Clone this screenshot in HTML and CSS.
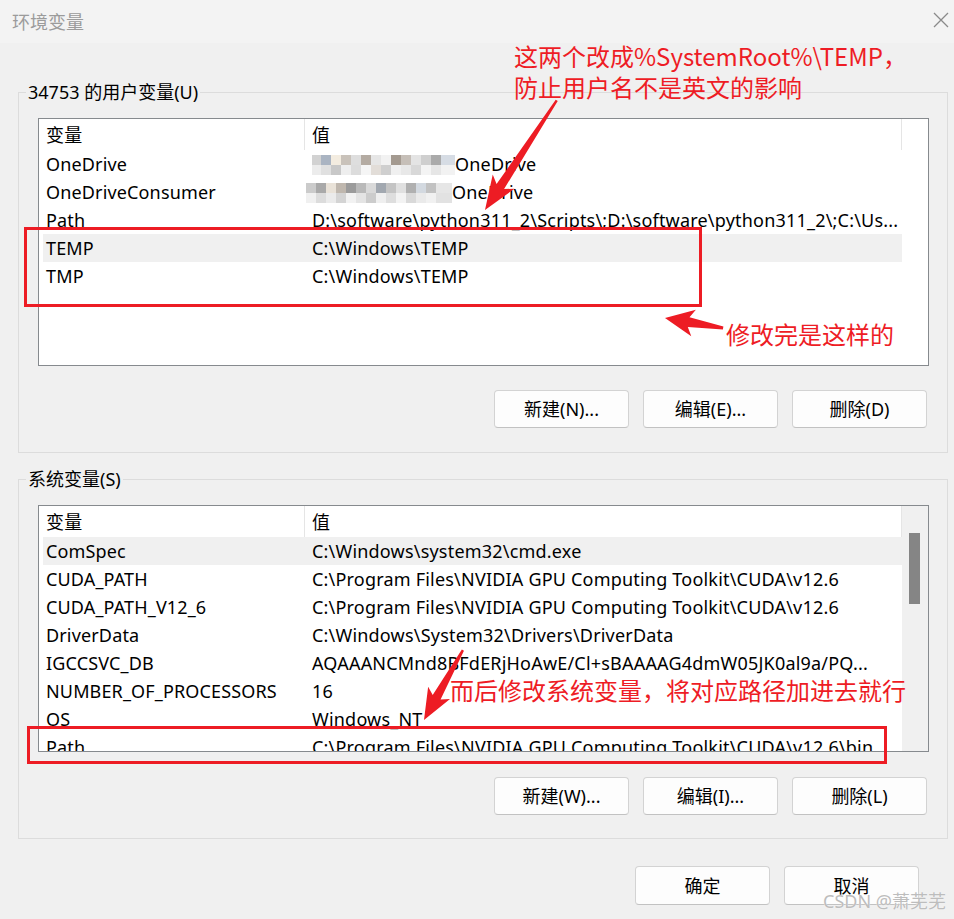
FILE: index.html
```html
<!DOCTYPE html>
<html lang="zh-CN">
<head>
<meta charset="utf-8">
<title>环境变量</title>
<link rel="stylesheet" href="styles.css">
</head>
<body>
<div class="window">
  <div class="titlebar">
    <span class="title">环境变量</span>
    <svg class="close" width="16" height="16" viewBox="0 0 16 16"><path d="M1 1 L15 15 M15 1 L1 15" stroke="#8a8a8a" stroke-width="1.3" fill="none"/></svg>
  </div>
  <div class="content">
    <fieldset class="group">
      <legend>34753 的用户变量(U)</legend>
      <div class="listbox">
        <div class="list-main">
          <div class="row head"><div class="c1">变量</div><div class="c2">值</div></div>
          <div class="row"><div class="c1">OneDrive</div><div class="c2"><span class="mosaic m1"></span>OneDrive</div></div>
          <div class="row"><div class="c1">OneDriveConsumer</div><div class="c2 shift"><span class="mosaic m2"></span>OneDrive</div></div>
          <div class="row"><div class="c1">Path</div><div class="c2">D:\software\python311_2\Scripts\;D:\software\python311_2\;C:\Us...</div></div>
          <div class="row sel"><div class="c1">TEMP</div><div class="c2">C:\Windows\TEMP</div></div>
          <div class="row"><div class="c1">TMP</div><div class="c2">C:\Windows\TEMP</div></div>
        </div>
      </div>
      <div class="buttons">
        <button class="btn">新建(N)...</button>
        <button class="btn">编辑(E)...</button>
        <button class="btn">删除(D)</button>
      </div>
    </fieldset>

    <fieldset class="group sys">
      <legend>系统变量(S)</legend>
      <div class="listbox short">
        <div class="list-main">
          <div class="row head"><div class="c1">变量</div><div class="c2">值</div></div>
          <div class="row sel"><div class="c1">ComSpec</div><div class="c2">C:\Windows\system32\cmd.exe</div></div>
          <div class="row"><div class="c1">CUDA_PATH</div><div class="c2">C:\Program Files\NVIDIA GPU Computing Toolkit\CUDA\v12.6</div></div>
          <div class="row"><div class="c1">CUDA_PATH_V12_6</div><div class="c2">C:\Program Files\NVIDIA GPU Computing Toolkit\CUDA\v12.6</div></div>
          <div class="row"><div class="c1">DriverData</div><div class="c2">C:\Windows\System32\Drivers\DriverData</div></div>
          <div class="row"><div class="c1">IGCCSVC_DB</div><div class="c2">AQAAANCMnd8BFdERjHoAwE/Cl+sBAAAAG4dmW05JK0al9a/PQ...</div></div>
          <div class="row"><div class="c1">NUMBER_OF_PROCESSORS</div><div class="c2">16</div></div>
          <div class="row"><div class="c1">OS</div><div class="c2">Windows_NT</div></div>
          <div class="row"><div class="c1">Path</div><div class="c2">C:\Program Files\NVIDIA GPU Computing Toolkit\CUDA\v12.6\bin</div></div>
        </div>
        <div class="scrollbar"><div class="thumb"></div></div>
      </div>
      <div class="buttons">
        <button class="btn">新建(W)...</button>
        <button class="btn">编辑(I)...</button>
        <button class="btn">删除(L)</button>
      </div>
    </fieldset>

    <div class="footer">
      <button class="btn tall">确定</button>
      <button class="btn tall">取消</button>
    </div>
  </div>

  <svg class="annot" width="954" height="919" viewBox="0 0 954 919">
    <rect x="25.5" y="228.5" width="675" height="77" fill="none" stroke="#ed1c24" stroke-width="3"/>
    <rect x="28.5" y="727.5" width="857" height="35" fill="none" stroke="#ed1c24" stroke-width="3"/>
    <g transform="translate(485 210) rotate(123.2)">
      <polygon points="0,0 -34,-13 -28,-4.5 -131,-1.2 -131,1.2 -28,4.5 -34,13" fill="#ed1c24"/>
    </g>
    <g transform="translate(665 318) rotate(189.8)">
      <polygon points="0,0 -29,-13.5 -24,-5 -59,-1.5 -59,1.5 -24,5 -29,13.5" fill="#ed1c24"/>
    </g>
    <g transform="translate(424 720) rotate(119.1)">
      <polygon points="0,0 -31,-12.5 -26,-4.5 -80,-1.2 -80,1.2 -26,4.5 -31,12.5" fill="#ed1c24"/>
    </g>
  </svg>
  <div class="note n1">这两个改成%SystemRoot%\TEMP，<br>防止用户名不是英文的影响</div>
  <div class="note n2">修改完是这样的</div>
  <div class="note n3">而后修改系统变量，将对应路径加进去就行</div>
  <div class="watermark">CSDN @萧芜芜</div>
</div>
</body>
</html>
```

FILE: styles.css
```css
* { box-sizing: border-box; }
html, body { margin: 0; padding: 0; }
body {
  width: 954px;
  height: 919px;
  overflow: hidden;
  background: #f0f0f0;
  font-family: "Noto Sans", "Noto Sans CJK SC", sans-serif;
  font-size: 18px;
  color: #000;
}
.window { position: relative; width: 954px; height: 919px; }

.titlebar {
  height: 43px;
  background: #f3f3f3;
  display: flex;
  align-items: center;
  justify-content: space-between;
  padding: 0 5px 0 12px;
}
.title { color: #9b9b9b; font-size: 18px; line-height: 22px; }
.close { display: block; margin-top: -4px; }

.content { padding: 38px 6px 0 18px; display: flex; flex-direction: column; }

fieldset.group {
  margin: 0;
  min-width: 0;
  border: 1px solid #dcdcdc;
  padding: 0 18px 24px 19px;
}
fieldset.sys { margin-top: 15px; padding-bottom: 23px; }
legend {
  padding: 0 2px;
  margin-left: -12px;
  font-size: 18px;
  line-height: 22px;
}

.listbox {
  margin-top: 15px;
  height: 248px;
  border: 1px solid #868a8e;
  background: #fff;
  display: flex;
  overflow: hidden;
}
.listbox.short { height: 247px; }
.list-main { width: 863px; padding-left: 4px; flex: none; }

.row {
  display: flex;
  align-items: center;
  height: 28px;
  line-height: 22px;
  white-space: nowrap;
}
.row.head { height: 31px; border-right: 1px solid #e5e5e5; }
.row.head .c1 { border-right: 1px solid #e5e5e5; align-self: stretch; display: flex; align-items: center; }
.row.sel { background: #f0f0f0; }
.c1 { width: 262px; flex: none; padding-left: 3px; overflow: hidden; letter-spacing: 0.15px; }
.c2 { flex: 1; min-width: 0; padding-left: 7px; overflow: hidden; letter-spacing: 0.2px; }
.c2.shift { padding-left: 1px; }

.mosaic {
  display: inline-block;
  vertical-align: middle;
  height: 20px;
  margin-top: -2px;
}
.m1 {
  width: 143px;
  background:
    linear-gradient(90deg, #d2d2d2 0 9px, #aab4c2 9px 19px, #f3ece0 19px 29px, #c9c2ba 29px 39px, #dedede 39px 49px, #b4aba2 49px 59px, #e6e6e6 59px 69px, #f2f2f2 69px 79px, #a49a90 79px 89px, #c6bfb8 89px 99px, #e4e4e4 99px 109px, #cfcfcf 109px 119px, #aaaaaa 119px 129px, #d6dce4 129px 143px) top / 100% 10px no-repeat,
    linear-gradient(90deg, #ececec 0 9px, #e0e0e0 9px 19px, #c8c8c8 19px 29px, #eeeeee 29px 39px, #dcdcdc 39px 49px, #f5f5f5 49px 59px, #e2ddd8 59px 69px, #cfcfcf 69px 79px, #f0f0f0 79px 89px, #e8e8e8 89px 99px, #d8d8d8 99px 109px, #f4f4f4 109px 119px, #e6e6e6 119px 129px, #f2f2f2 129px 143px) bottom / 100% 10px no-repeat;
}
.m2 {
  width: 146px;
  background:
    linear-gradient(90deg, #cbcbcb 0 10px, #a9a9a9 10px 20px, #e9e2d8 20px 30px, #bfb7ae 30px 40px, #9b9b9b 40px 50px, #b9b9b9 50px 60px, #d9d9d9 60px 70px, #a2a8b0 70px 80px, #c4c4c4 80px 90px, #e0e0e0 90px 100px, #b0b0b0 100px 110px, #d3d9e0 110px 120px, #c2c2c2 120px 130px, #e6e6e6 130px 146px) top / 100% 10px no-repeat,
    linear-gradient(90deg, #f0f0f0 0 10px, #dcdcdc 10px 20px, #ebebeb 20px 30px, #d4d4d4 30px 40px, #f2f2f2 40px 50px, #e4e4e4 50px 60px, #cccccc 60px 70px, #efefef 70px 80px, #dedede 80px 90px, #f3f3f3 90px 100px, #d9d9d9 100px 110px, #eaeaea 110px 120px, #f1f1f1 120px 130px, #e2e2e2 130px 146px) bottom / 100% 10px no-repeat;
}

.scrollbar { flex: 1; background: #f0f0f0; padding: 27px 0 0 7px; }
.thumb { width: 11px; height: 71px; background: #858585; }

.buttons {
  display: flex;
  justify-content: flex-end;
  gap: 14px;
  margin-top: 24px;
  padding-right: 2px;
}
fieldset.sys .buttons { margin-top: 25px; }

.btn {
  width: 135px;
  height: 38px;
  border: 1px solid #d3d3d3;
  border-bottom-color: #c2c2c2;
  border-radius: 4px;
  background: #fdfdfd;
  font-family: "Noto Sans", "Noto Sans CJK SC", sans-serif;
  font-size: 18px;
  color: #000;
  padding: 0;
  line-height: 22px;
}
.btn.tall { height: 39px; }

.footer {
  display: flex;
  justify-content: flex-end;
  gap: 14px;
  margin-top: 27px;
  padding-right: 29px;
}

.annot { position: absolute; left: 0; top: 0; pointer-events: none; }
.note {
  position: absolute;
  color: #ee1c25;
  font-family: "Noto Sans CJK SC", "Noto Sans", sans-serif;
  font-size: 24px;
  line-height: 31px;
  white-space: nowrap;
}
.n1 { left: 514px; top: 40px; }
.n2 { left: 726px; top: 318px; }
.n3 { left: 450px; top: 674px; }

.watermark {
  position: absolute;
  left: 823px;
  top: 889px;
  font-family: "Noto Sans", "Noto Sans CJK SC", sans-serif;
  font-size: 18px;
  line-height: 24px;
  color: #bdbdbd;
  text-shadow: 0 0 1px #ffffff;
  white-space: nowrap;
}
```
